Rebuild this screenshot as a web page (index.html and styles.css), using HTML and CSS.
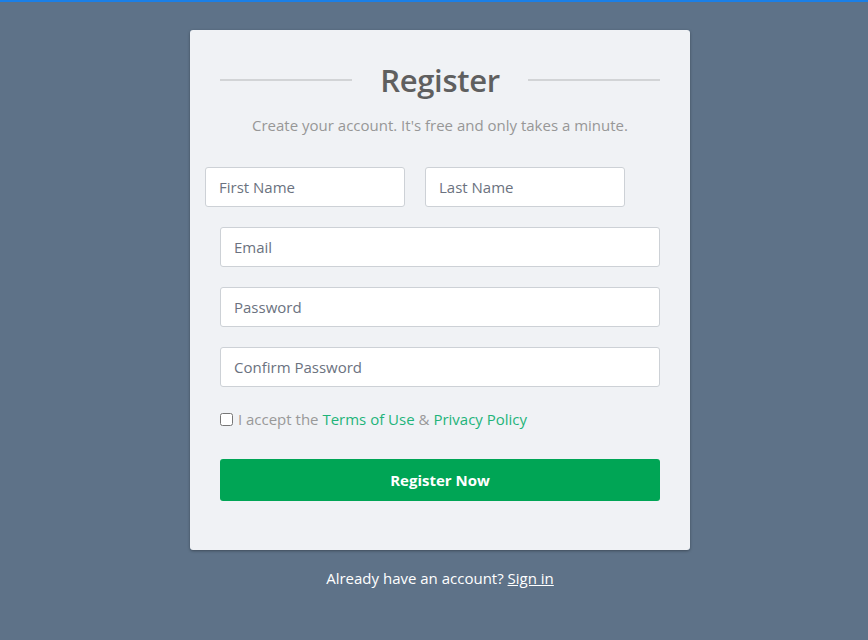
FILE: index.html
```html
<!DOCTYPE html>
<html>
<head>
<meta charset="utf-8">
<link rel="stylesheet" href="styles.css">
</head>
<body>
<div class="topbar"></div>
<main class="page">
  <form class="card">
    <div class="heading">
      <span class="rule"></span>
      <h2 class="title">Register</h2>
      <span class="rule"></span>
    </div>
    <p class="hint">Create your account. It's free and only takes a minute.</p>
    <div class="name-row">
      <input class="field half" type="text" placeholder="First Name">
      <input class="field half" type="text" placeholder="Last Name">
    </div>
    <input class="field" type="email" placeholder="Email">
    <input class="field" type="password" placeholder="Password">
    <input class="field" type="password" placeholder="Confirm Password">
    <label class="accept"><input class="check" type="checkbox"> I accept the <a href="#">Terms of Use</a> &amp; <a href="#">Privacy Policy</a></label>
    <button class="submit" type="button">Register Now</button>
  </form>
  <p class="signin">Already have an account? <a href="#">Sign in</a></p>
</main>
</body>
</html>
```
FILE: styles.css
```css
html, body {
  margin: 0;
  padding: 0;
}
body {
  background: #5e7288;
  font-family: "Open Sans", "Noto Sans", sans-serif;
  min-height: 640px;
}
.topbar {
  height: 2px;
  background: #1b7fe6;
}
.page {
  display: flex;
  flex-direction: column;
  align-items: center;
  padding: 28px 0 0 12px;
}
.card {
  width: 500px;
  box-sizing: border-box;
  background: #f0f2f5;
  border-radius: 3px;
  box-shadow: 0 1px 3px rgba(0,0,0,0.35);
  padding: 29px 30px 49px;
  display: flex;
  flex-direction: column;
}
.heading {
  display: flex;
  align-items: center;
  justify-content: space-between;
  height: 42px;
}
.rule {
  width: 132px;
  height: 2px;
  background: #d2d4d6;
}
.title {
  margin: 0;
  font-size: 31px;
  font-weight: 600;
  color: #5f5f5f;
  letter-spacing: -0.3px;
}
.hint {
  margin: 14px 0 0;
  text-align: center;
  color: #979797;
  font-size: 15px;
}
.name-row {
  display: flex;
  gap: 20px;
  margin: 32px -15px 0;
}
.field {
  box-sizing: border-box;
  height: 40px;
  border: 1px solid #cdd1d6;
  border-radius: 3px;
  background: #fff;
  padding: 0 13px;
  font-family: inherit;
  font-size: 15px;
  color: #555;
  margin-top: 20px;
  width: 100%;
}
.name-row .field {
  margin-top: 0;
  width: 200px;
}
.field::placeholder {
  color: #6b7280;
}
.accept {
  margin-top: 22px;
  color: #999;
  font-size: 15px;
  line-height: 20px;
}
.accept a {
  color: #1fb47a;
  text-decoration: none;
}
.check {
  margin: 0 1px 0 0;
  width: 13px;
  height: 13px;
  vertical-align: -1px;
}
.submit {
  margin-top: 30px;
  height: 42px;
  border: none;
  border-radius: 3px;
  background: #00a555;
  color: #fff;
  font-family: inherit;
  font-weight: 700;
  font-size: 15px;
}
.signin {
  margin: 18px 0 0;
  color: #fff;
  font-size: 15px;
}
.signin a {
  color: #fff;
  text-decoration: underline;
}
```
